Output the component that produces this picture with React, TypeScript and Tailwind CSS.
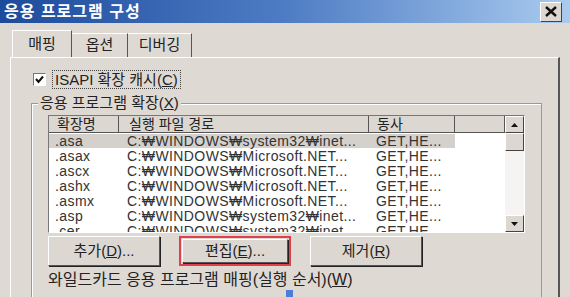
const rows = [
  { ext: ".asa", path: "C:₩WINDOWS₩system32₩inet...", verb: "GET,HE..." },
  { ext: ".asax", path: "C:₩WINDOWS₩Microsoft.NET...", verb: "GET,HE..." },
  { ext: ".ascx", path: "C:₩WINDOWS₩Microsoft.NET...", verb: "GET,HE..." },
  { ext: ".ashx", path: "C:₩WINDOWS₩Microsoft.NET...", verb: "GET,HE..." },
  { ext: ".asmx", path: "C:₩WINDOWS₩Microsoft.NET...", verb: "GET,HE..." },
  { ext: ".asp", path: "C:₩WINDOWS₩system32₩inet...", verb: "GET,HE..." },
  { ext: ".cer", path: "C:₩WINDOWS₩system32₩inet...", verb: "GET,HE..." },
]

const font = { fontFamily: '"Liberation Sans", "Noto Sans CJK KR", sans-serif' }

const Button = ({ label, hot, after, red }: { label: string; hot: string; after: string; red?: boolean }) => (
  <div className={`flex h-[30px] w-[112px] items-center justify-center ${red ? "border-2 border-[#e0404c] p-[1px]" : ""}`}>
    <div className="flex h-full w-full items-center justify-center border border-b-[#555] border-l-white border-r-[#555] border-t-white bg-[#dcd7d1] text-[15px] text-[#222] shadow-[1px_1px_0_#222]">
      {label}(<span className="underline">{hot}</span>){after}
    </div>
  </div>
)

export default function App() {
  return (
    <div className="relative h-[297px] w-[570px] overflow-hidden bg-[#dfd9d3] text-[#222]" style={font}>
      {/* 제목 표시줄 */}
      <div className="flex h-[23px] items-center justify-between bg-gradient-to-r from-[#1d4b9b] via-[#4e7cc4] to-[#aacbee] pl-1 pr-2">
        <span className="text-[16px] font-bold tracking-[1px] text-white">응용 프로그램 구성</span>
        <div className="flex h-[20px] w-[22px] items-center justify-center border border-b-[#444] border-l-white border-r-[#444] border-t-white bg-[#dcd7d1]">
          <svg width="12" height="11" viewBox="0 0 12 11">
            <path d="M1 1 L11 10 M11 1 L1 10" stroke="#111" strokeWidth="2.4" />
          </svg>
        </div>
      </div>

      {/* 탭 */}
      <div className="flex pl-[12px] pt-[7px]">
        <div className="relative z-10 -mb-[1px] flex h-[27px] w-[60px] items-center justify-center border-l border-r border-t border-l-white border-r-[#555] border-t-white bg-[#dfd9d3] text-[15px]">
          매핑
        </div>
        <div className="mt-[3px] flex h-[24px] w-[56px] items-center justify-center border-r border-t border-r-[#555] border-t-white text-[15px]">
          옵션
        </div>
        <div className="mt-[3px] flex h-[24px] w-[64px] items-center justify-center border-r border-t border-r-[#555] border-t-white text-[15px]">
          디버깅
        </div>
      </div>

      {/* 탭 패널 */}
      <div className="ml-[10px] mr-[10px] h-[260px] border-l border-r-2 border-t border-l-white border-r-[#555] border-t-white pl-[20px] pr-[16px]">
        <div className="flex items-center gap-[6px] pl-[2px] pt-[12px]">
          <div className="flex h-[13px] w-[13px] items-center justify-center border border-b-white border-l-[#777] border-r-white border-t-[#777] bg-white">
            <svg width="9" height="9" viewBox="0 0 9 9">
              <path d="M1 4 L3.5 7 L8 1.5" stroke="#111" strokeWidth="2" fill="none" />
            </svg>
          </div>
          <span className="border border-dotted border-[#444] px-[2px] text-[15px] leading-[17px]">
            ISAPI 확장 캐시(<span className="underline">C</span>)
          </span>
        </div>

        {/* 그룹 박스 */}
        <div className="relative mt-[14px] h-[220px] border-l border-r border-t border-l-[#999] border-r-[#999] border-t-[#999] pl-[16px] pr-[16px] shadow-[inset_1px_1px_0_white]">
          <span className="absolute -top-[10px] left-[6px] bg-[#dfd9d3] px-[2px] text-[15px] leading-[18px]">
            응용 프로그램 확장(<span className="underline">X</span>)
          </span>

          {/* 목록 */}
          <div className="mt-[11px] flex h-[118px] w-[477px] border border-b-white border-l-[#777] border-r-white border-t-[#777] bg-white">
            <div className="flex-1 overflow-hidden">
              <div className="flex h-[17px] bg-[#dcd7d1] text-[14px] leading-[16px]">
                <div className="w-[70px] border-b border-r border-b-[#555] border-r-[#555] pl-[8px]">확장명</div>
                <div className="w-[250px] border-b border-r border-b-[#555] border-r-[#555] pl-[10px]">실행 파일 경로</div>
                <div className="w-[86px] border-b border-r border-b-[#555] border-r-[#555] pl-[8px]">동사</div>
                <div className="flex-1 border-b border-r border-b-[#555] border-r-[#555]" />
              </div>
              {rows.map((r, i) => (
                <div key={i} className="flex h-[15px] pt-[1px] text-[14px] leading-[14px] tracking-[0.4px] text-[#333]">
                  <div className={`flex w-[406px] ${i === 0 ? "bg-[#d4d0cc]" : ""}`}>
                    <div className="w-[70px] pl-[6px]">{r.ext}</div>
                    <div className="w-[250px] pl-[8px]">{r.path}</div>
                    <div className="w-[86px] pl-[7px]">{r.verb}</div>
                  </div>
                </div>
              ))}
            </div>
            {/* 스크롤바 */}
            <div className="flex w-[19px] flex-col bg-[#f6f4f2]">
              <div className="flex h-[17px] items-center justify-center border border-b-[#444] border-l-white border-r-[#444] border-t-white bg-[#dcd7d1]">
                <svg width="7" height="4" viewBox="0 0 7 4"><path d="M0 4 L3.5 0 L7 4 Z" fill="#111" /></svg>
              </div>
              <div className="h-[18px] border border-b-[#444] border-l-white border-r-[#444] border-t-white bg-[#dcd7d1]" />
              <div className="flex-1" />
              <div className="flex h-[17px] items-center justify-center border border-b-[#444] border-l-white border-r-[#444] border-t-white bg-[#dcd7d1]">
                <svg width="7" height="4" viewBox="0 0 7 4"><path d="M0 0 L7 0 L3.5 4 Z" fill="#111" /></svg>
              </div>
            </div>
          </div>

          {/* 버튼 */}
          <div className="mt-[3px] flex gap-[19px]">
            <Button label="추가" hot="D" after="..." />
            <Button label="편집" hot="E" after="..." red />
            <Button label="제거" hot="R" after="" />
          </div>

          <div className="mt-[5px] text-[16px] leading-[18px]">
            와일드카드 응용 프로그램 매핑(실행 순서)(<span className="underline">W</span>)
          </div>
        </div>
      </div>

      <div className="absolute bottom-0 left-[286px] h-[7px] w-[7px] bg-[#4a7fd8]" />
    </div>
  )
}
